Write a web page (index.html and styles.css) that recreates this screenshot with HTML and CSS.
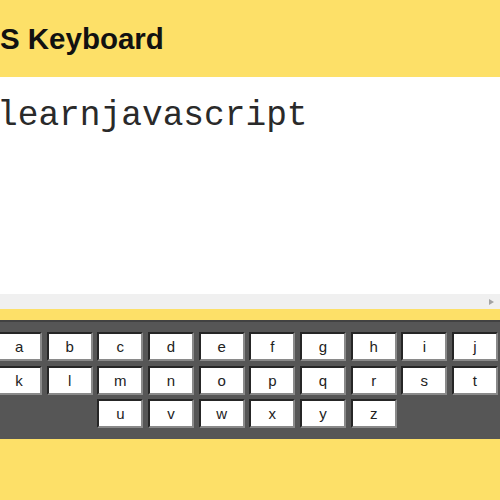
FILE: index.html
```html
<!DOCTYPE html>
<html lang="en">
<head>
<meta charset="utf-8">
<title>JS Keyboard</title>
<link rel="stylesheet" href="styles.css">
</head>
<body>
<div class="page">
  <header class="header">
    <h1 class="title">JS Keyboard</h1>
  </header>
  <div class="editor-box">
    <textarea class="editor" wrap="off" spellcheck="false">learnjavascript</textarea>
    <div class="hscroll"><span class="arrow-right"></span></div>
  </div>
  <div class="keyboard">
    <div class="row">
      <button class="key">a</button><button class="key">b</button><button class="key">c</button><button class="key">d</button><button class="key">e</button><button class="key">f</button><button class="key">g</button><button class="key">h</button><button class="key">i</button><button class="key">j</button>
    </div>
    <div class="row">
      <button class="key">k</button><button class="key">l</button><button class="key">m</button><button class="key">n</button><button class="key">o</button><button class="key">p</button><button class="key">q</button><button class="key">r</button><button class="key">s</button><button class="key">t</button>
    </div>
    <div class="row">
      <button class="key">u</button><button class="key">v</button><button class="key">w</button><button class="key">x</button><button class="key">y</button><button class="key">z</button>
    </div>
  </div>
</div>
</body>
</html>
```
FILE: styles.css
```css
html, body {
  margin: 0;
  padding: 0;
  background: #fde068;
  overflow: hidden;
}

.page {
  margin-left: -20px;
  width: 520px;
  height: 500px;
  background: #fde068;
  font-family: "Liberation Sans", Arial, sans-serif;
}

.header {
  height: 77px;
  display: flex;
  align-items: center;
  padding-left: 3.5px;
  box-sizing: border-box;
}

.title {
  margin: 0;
  font-size: 29.5px;
  line-height: 29.5px;
  font-weight: bold;
  color: #111;
}

.editor-box {
  margin-bottom: 11px;
  background: #fff;
}

.editor {
  display: block;
  box-sizing: border-box;
  width: 520px;
  height: 217px;
  margin: 0;
  padding: 19px 0 0 17px;
  border: none;
  outline: none;
  resize: none;
  background: #fff;
  color: #2a2a2a;
  font-family: "Courier New", "Nimbus Mono PS", "FreeMono", "Liberation Mono", monospace;
  font-size: 34.5px;
  line-height: normal;
  overflow: hidden;
  white-space: pre;
}

.hscroll {
  height: 15px;
  background: #f0f0f0;
  display: flex;
  justify-content: flex-end;
  align-items: center;
  padding-right: 6px;
}

.arrow-right {
  width: 0;
  height: 0;
  border-top: 3.5px solid transparent;
  border-bottom: 3.5px solid transparent;
  border-left: 5px solid #a3a3a3;
}

.keyboard {
  box-sizing: border-box;
  height: 119px;
  background: #565656;
  border-top: 2px solid #424242;
  padding-top: 10px;
  padding-left: 14px;
  display: flex;
  flex-direction: column;
  align-items: center;
  gap: 4.5px;
}

.row {
  width: 503px;
  display: flex;
  justify-content: center;
  gap: 4.67px;
}

.key {
  box-sizing: border-box;
  width: 46px;
  height: 29px;
  flex: none;
  margin: 0;
  padding: 0;
  background: #fff;
  border: 2px solid;
  border-color: #262626 #8a8a8a #8a8a8a #262626;
  border-radius: 0;
  font-family: "Liberation Sans", Arial, sans-serif;
  font-size: 15px;
  color: #222;
  line-height: 1;
}
```
